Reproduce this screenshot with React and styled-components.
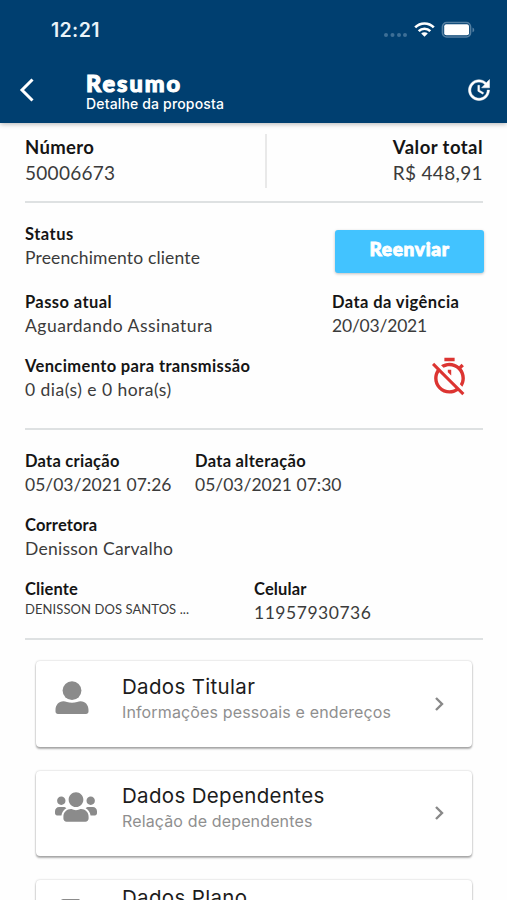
import React from 'react';
import styled, { createGlobalStyle } from 'styled-components';
import { FaUsers } from 'react-icons/fa';

const uiFont = 'Inter, "Liberation Sans", sans-serif';
const bodyFont = 'Lato, "Noto Sans", sans-serif';

const GlobalStyle = createGlobalStyle`
  * {
    box-sizing: border-box;
  }

  body {
    margin: 0;
    background: #fff;
    font-family: ${bodyFont};
  }
`;

const Screen = styled.div`
  width: 507px;
  height: 900px;
  overflow: hidden;
  background: #fefefe;
`;

const Header = styled.header`
  height: 123px;
  background: #003f70;
  color: #fff;
  box-shadow: 0 1px 5px rgba(0, 0, 0, 0.3);
`;

const StatusBar = styled.div`
  display: flex;
  align-items: center;
  justify-content: space-between;
  height: 60px;
  padding: 0 32px 0 51px;
`;

const Clock = styled.span`
  font: 600 19.5px/24px ${uiFont};
  letter-spacing: ${props => props.$track}px;
  color: #e9f3f8;
`;

const Indicators = styled.svg`
  display: block;
  width: 92px;
  height: 20px;
  margin-bottom: 1px;
`;

const NavBar = styled.div`
  display: flex;
  align-items: center;
  height: 62px;
  padding: 0 14px 4px 19px;
`;

const BackIcon = styled.svg`
  width: 16px;
  height: 24px;
  margin: 1px 51px 0 0;
`;

const Heading = styled.div`
  flex: 1;
  padding-top: 6px;
`;

const Title = styled.h1`
  margin: 0;
  font: 900 23.5px/23px ${bodyFont};
  letter-spacing: ${props => props.$track}px;
  -webkit-text-stroke: 1.1px #fff;
`;

const Subtitle = styled.div`
  font: 500 14px/17px ${uiFont};
  letter-spacing: ${props => props.$track}px;
`;

const UpdateIcon = styled.svg`
  width: 28px;
  height: 28px;
  margin-top: 2px;
  fill: #fff;
  stroke: #fff;
  stroke-width: 0.4px;
`;

const Content = styled.main`
  padding: 11px 24px 0 25px;
`;

const Section = styled.section`
  height: ${props => props.$height}px;
  padding-top: ${props => props.$top || 0}px;
  border-bottom: 2px solid #dee1e2;
`;

const Row = styled.div`
  display: flex;
  align-items: flex-start;
  margin-bottom: ${props => props.$gap || 0}px;
`;

const Separator = styled.div`
  width: 2px;
  height: 54px;
  margin-right: auto;
  background: #e9e9e9;
`;

const FieldBox = styled.div`
  width: ${props => (props.$width ? `${props.$width}px` : 'auto')};
  text-align: ${props => props.$align || 'left'};
  white-space: nowrap;
`;

const Label = styled.div`
  font-weight: 700;
  font-size: ${props => (props.$large ? 18.5 : 16.5)}px;
  line-height: ${props => (props.$large ? 26 : 23)}px;
  letter-spacing: ${props => props.$track || 0}px;
  color: #151515;
`;

const Value = styled.div`
  font-size: ${props => props.$size || 17.5}px;
  line-height: ${props => props.$line || 23}px;
  letter-spacing: ${props => props.$track || 0}px;
  color: #3b3b3b;
`;

const ResendButton = styled.button`
  width: 149px;
  height: 43px;
  margin: 7px -1px 0 auto;
  padding: 0 0 6px;
  border: 0;
  border-radius: 3px;
  background: #42c3ff;
  color: #fff;
  font: 900 19px/24px ${bodyFont};
  letter-spacing: ${props => props.$track}px;
  -webkit-text-stroke: 0.9px #fff;
  box-shadow: 0 1px 3px rgba(0, 0, 0, 0.25);
`;

const TimerOff = styled.svg`
  width: 41px;
  height: 41px;
  margin: 1px 13px 0 auto;
  fill: #dc3431;
`;

const Cards = styled.div`
  display: grid;
  gap: 24px;
  padding: 21px 11px 0;
`;

const CardBox = styled.div`
  display: flex;
  align-items: flex-start;
  height: 85.5px;
  padding: 0 26px 0 19px;
  border-radius: 4px;
  background: #fff;
  box-shadow: 0 2px 2px rgba(0, 0, 0, 0.3), 0 0 2px rgba(0, 0, 0, 0.25);
`;

const CardIcon = styled.div`
  width: 67px;
  padding-top: ${props => props.$top}px;
  color: #8b8b8b;

  svg {
    display: block;
  }
`;

const CardText = styled.div`
  flex: 1;
  padding-top: ${props => props.$top}px;
  font-family: ${uiFont};
  white-space: nowrap;
`;

const CardTitle = styled.div`
  font-size: 20.5px;
  line-height: 26px;
  letter-spacing: ${props => props.$track}px;
  color: #1c1c1c;
`;

const CardDetail = styled.div`
  font-size: 16px;
  line-height: 24px;
  letter-spacing: ${props => props.$track}px;
  color: #8f8f8f;
`;

const Chevron = styled.svg`
  align-self: center;
  width: 14px;
  height: 18px;
`;

function Field({ label, value, width, align, large, labelTrack, valueTrack, size, line }) {
  return (
    <FieldBox $width={width} $align={align}>
      <Label $large={large} $track={labelTrack}>{label}</Label>
      <Value $size={size} $line={line} $track={valueTrack}>{value}</Value>
    </FieldBox>
  );
}

function UserIcon() {
  return (
    <svg width="34" height="34" viewBox="0 0 34 34" fill="currentColor">
      <circle cx="17" cy="9.6" r="9.4" />
      <path d="M8.5 20.3c2 0 4.5 1.4 8.5 1.4s6.5-1.4 8.5-1.4c5 0 8 4 8 8.7v1.5c0 1.5-1 2.5-2.5 2.5H3C1.5 33 .5 32 .5 30.5V29c0-4.7 3-8.7 8-8.7z" />
    </svg>
  );
}

function PlanIcon() {
  return (
    <svg width="34" height="40" viewBox="0 0 34 40" fill="currentColor">
      <path d="M8.5 0H24l7 7v30H5.5V3a3 3 0 0 1 3-3z" />
    </svg>
  );
}

const cards = [
  { title: 'Dados Titular', detail: 'Informações pessoais e endereços', icon: <UserIcon />, iconTop: 20, textTop: 13 },
  { title: 'Dados Dependentes', detail: 'Relação de dependentes', icon: <FaUsers size={42} />, iconTop: 15.5, textTop: 12.5 },
  { title: 'Dados Plano', icon: <PlanIcon />, iconTop: 18.5, textTop: 4.5 },
];

export default function App() {
  return (
    <Screen>
      <GlobalStyle />
      <Header>
        <StatusBar>
          <Clock $track={0.35}>12:21</Clock>
          <Indicators viewBox="0 0 92 20">
            <g fill="#3d6f96">
              <circle cx="3" cy="15" r="2" />
              <circle cx="9.5" cy="15" r="2" />
              <circle cx="16" cy="15" r="2" />
              <circle cx="22" cy="15" r="2" />
            </g>
            <g fill="none" stroke="#fff" strokeWidth="2.6">
              <path d="M32.2 7.4a13 13 0 0 1 18.6 0" />
              <path d="M35.7 11.1a8.2 8.2 0 0 1 11.6 0" />
            </g>
            <path d="M38.2 13.5a4.7 4.7 0 0 1 6.6 0L41.5 16.8z" fill="#fff" />
            <rect x="59.5" y="2.5" width="28" height="14.5" rx="4.2" fill="none" stroke="#547fa1" strokeWidth="1.7" />
            <rect x="61.2" y="4.3" width="24.8" height="11" rx="2" fill="#fff" />
            <path d="M89.5 7.5c2.3.8 2.3 4 0 4.8z" fill="#547fa1" />
          </Indicators>
        </StatusBar>
        <NavBar>
          <BackIcon viewBox="0 0 16 24" fill="none" stroke="#fff" strokeWidth="3">
            <path d="M13.5 1.5 3 12l10.5 10.5" />
          </BackIcon>
          <Heading>
            <Title $track={2}>Resumo</Title>
            <Subtitle $track={0.16}>Detalhe da proposta</Subtitle>
          </Heading>
          <UpdateIcon viewBox="0 0 24 24">
            <path d="M21 10.12h-6.78l2.74-2.82c-2.73-2.7-7.15-2.8-9.88-.1-2.73 2.71-2.73 7.08 0 9.79s7.15 2.71 9.88 0C18.32 15.65 19 14.08 19 12.1h2c0 1.98-.88 4.55-2.64 6.29-3.51 3.48-9.21 3.48-12.72 0-3.5-3.47-3.53-9.11-.02-12.58s9.14-3.47 12.65 0L21 3v7.120zM12.5 8v4.25l3.5 2.080-.72 1.210L11 13V8h1.5z" />
          </UpdateIcon>
        </NavBar>
      </Header>

      <Content>
        <Section $height={69}>
          <Row>
            <Field width={240} large label="Número" value="50006673" size={19} line={26} labelTrack={0.35} valueTrack={0.28} />
            <Separator />
            <Field large label="Valor total" value="R$ 448,91" align="right" size={19} line={26} labelTrack={0.45} valueTrack={0.35} />
          </Row>
        </Section>

        <Section $height={227} $top={20}>
          <Row $gap={18}>
            <Field label="Status" value="Preenchimento cliente" labelTrack={0.5} valueTrack={0.15} />
            <ResendButton $track={0.7}>Reenviar</ResendButton>
          </Row>
          <Row $gap={18}>
            <Field width={307} label="Passo atual" value="Aguardando Assinatura" labelTrack={0.4} valueTrack={0.48} />
            <Field label="Data da vigência" value="20/03/2021" labelTrack={0.42} valueTrack={-0.2} />
          </Row>
          <Row>
            <Field label="Vencimento para transmissão" value="0 dia(s) e 0 hora(s)" labelTrack={0.37} valueTrack={0.47} />
            <TimerOff viewBox="0 0 24 24">
              <path d="M19.04 4.55l-1.42 1.42C16.07 4.74 14.12 4 12 4c-1.83 0-3.53.55-4.95 1.48l1.46 1.46C9.53 6.35 10.73 6 12 6c3.87 0 7 3.13 7 7 0 1.27-.35 2.47-.94 3.49l1.45 1.45C20.45 16.53 21 14.83 21 13c0-2.12-.74-4.07-1.97-5.61l1.42-1.42-1.41-1.42zM15 1H9v2h6V1zm-4 8.44l2 2V8h-2v1.44zM3.02 4L1.75 5.27 4.5 8.03C3.55 9.45 3 11.16 3 13c0 4.97 4.02 9 9 9 1.84 0 3.55-.55 4.98-1.5l2.5 2.5 1.27-1.27-7.71-7.71L3.02 4zM12 20c-3.87 0-7-3.13-7-7 0-1.28.35-2.48.95-3.52l9.56 9.56c-1.03.61-2.23.96-3.51.96z" />
            </TimerOff>
          </Row>
        </Section>

        <Section $height={210} $top={20}>
          <Row $gap={18}>
            <Field width={170} label="Data criação" value="05/03/2021 07:26" labelTrack={0.25} />
            <Field label="Data alteração" value="05/03/2021 07:30" labelTrack={0.3} />
          </Row>
          <Row $gap={18}>
            <Field label="Corretora" value="Denisson Carvalho" labelTrack={0.15} valueTrack={0.25} />
          </Row>
          <Row>
            <Field width={229} label="Cliente" value="DENISSON DOS SANTOS ..." size={13} line={17} labelTrack={0.1} valueTrack={0.08} />
            <Field label="Celular" value="11957930736" labelTrack={0.15} valueTrack={0.53} />
          </Row>
        </Section>

        <Cards>
          {cards.map(card => (
            <CardBox key={card.title}>
              <CardIcon $top={card.iconTop}>{card.icon}</CardIcon>
              <CardText $top={card.textTop}>
                <CardTitle $track={0.33}>{card.title}</CardTitle>
                {card.detail && <CardDetail $track={0.14}>{card.detail}</CardDetail>}
              </CardText>
              <Chevron viewBox="0 0 14 18" fill="none" stroke="#898989" strokeWidth="2.4">
                <path d="M4 3l6 6-6 6" />
              </Chevron>
            </CardBox>
          ))}
        </Cards>
      </Content>
    </Screen>
  );
}
